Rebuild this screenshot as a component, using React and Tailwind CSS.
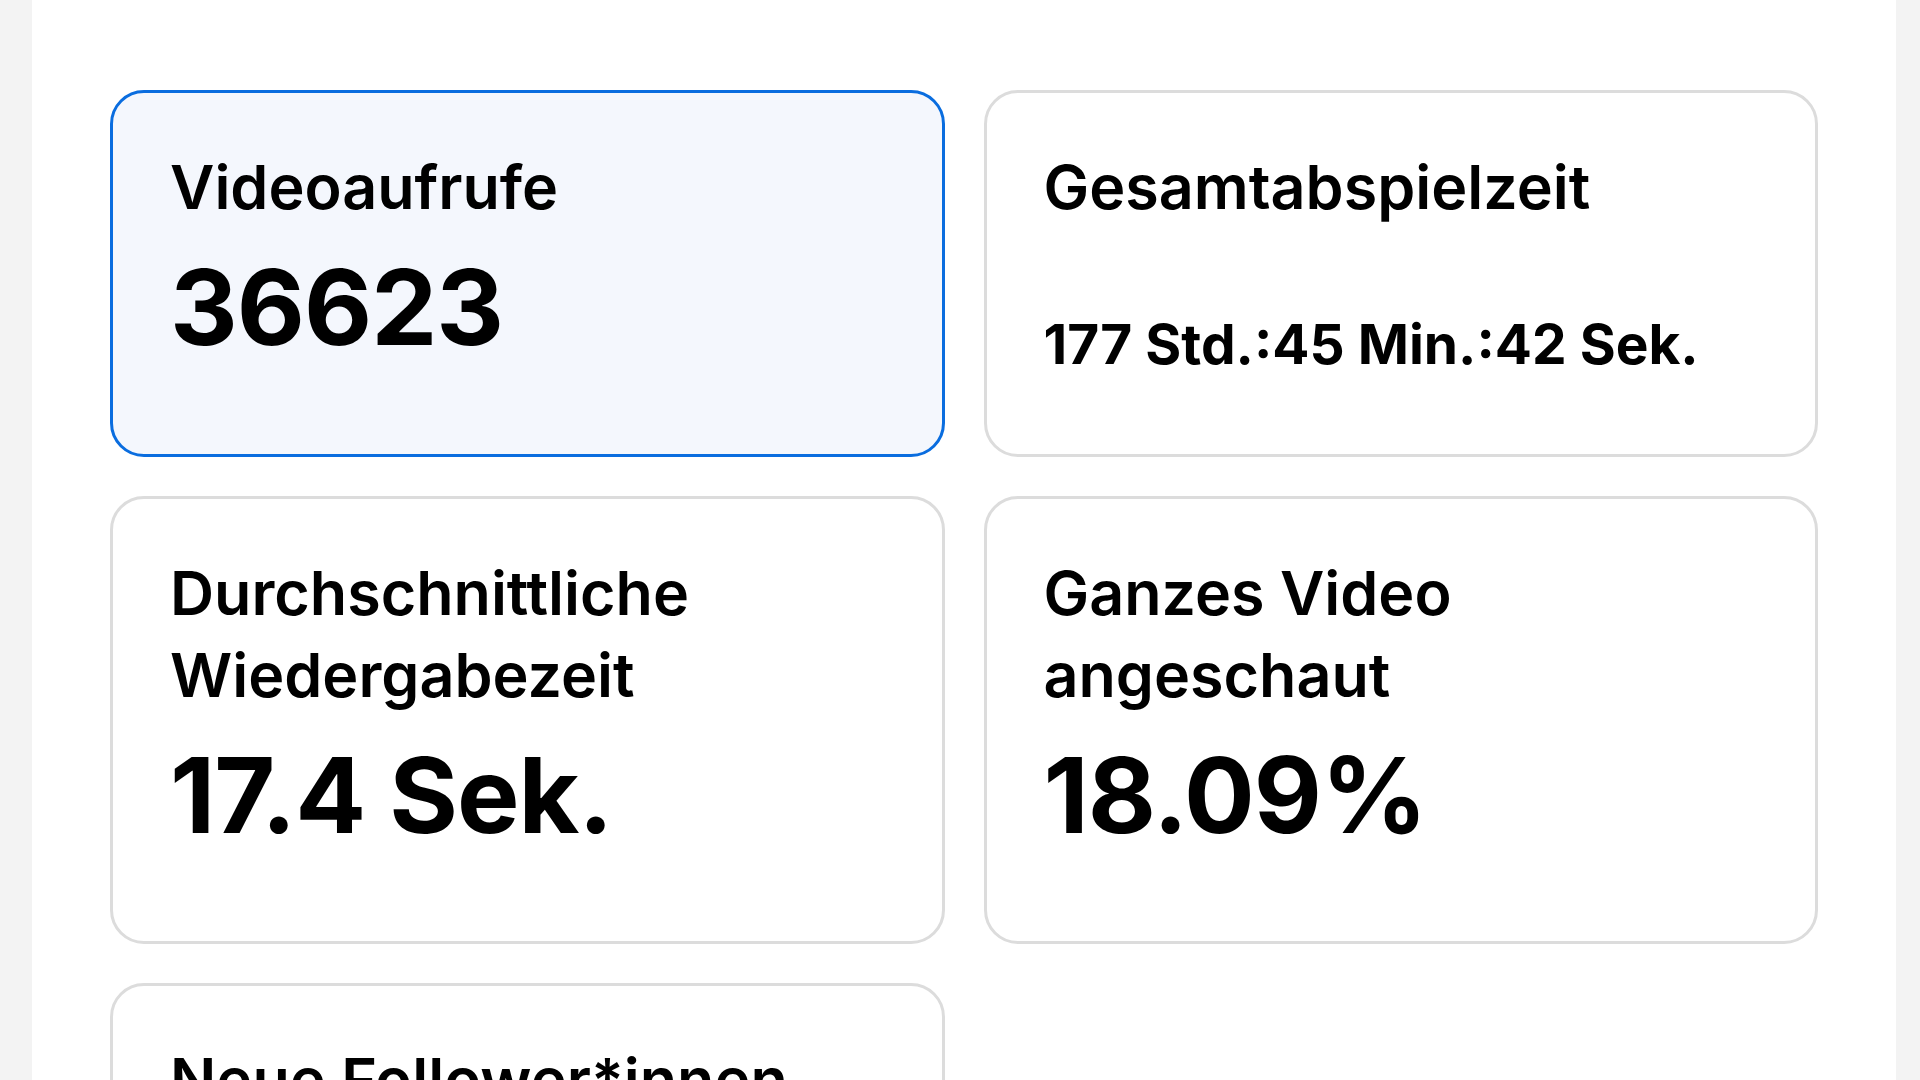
const stats = [
  { label: "Videoaufrufe", value: "36623", active: true },
  { label: "Gesamtabspielzeit", value: "177 Std.:45 Min.:42 Sek.", small: true },
  { label: "Durchschnittliche Wiedergabezeit", value: "17.4 Sek.", twoLine: true },
  { label: "Ganzes Video angeschaut", value: "18.09%", twoLine: true },
  { label: "Neue Follower*innen", value: "24" },
];

function StatCard({ label, value, active, small, twoLine }) {
  return (
    <div
      className={
        active
          ? "flex flex-col justify-between rounded-[34px] border-[3px] border-[#0a6ddf] bg-[#f4f7fd] pl-[57px] pr-[40px] pt-[53px] pb-[68px]"
          : "flex flex-col justify-between rounded-[34px] border-[3px] border-[#dcdcdc] bg-white pl-[57px] pr-[40px] pt-[53px] pb-[68px]"
      }
    >
      <div
        className={
          twoLine
            ? "max-w-[460px] text-[61px] font-semibold leading-[82px] text-black"
            : "text-[61px] font-semibold leading-[82px] text-black"
        }
      >
        {label}
      </div>
      <div
        className={
          small
            ? "text-[55px] font-bold leading-normal text-black"
            : "text-[105px] font-bold leading-normal tracking-[-1px] text-black"
        }
      >
        {value}
      </div>
    </div>
  );
}

export default function App() {
  return (
    <div
      className="flex h-[1080px] w-full overflow-hidden bg-[#f3f3f3] pl-[32px] pr-[24px]"
      style={{ fontFamily: "Inter, 'Noto Sans', sans-serif" }}
    >
      <div className="flex-1 bg-white px-[78px] pt-[90px]">
        <div className="grid grid-cols-2 gap-x-[39px] gap-y-[39px]">
          {stats.map((s) => (
            <StatCard key={s.label} {...s} />
          ))}
        </div>
      </div>
    </div>
  );
}
